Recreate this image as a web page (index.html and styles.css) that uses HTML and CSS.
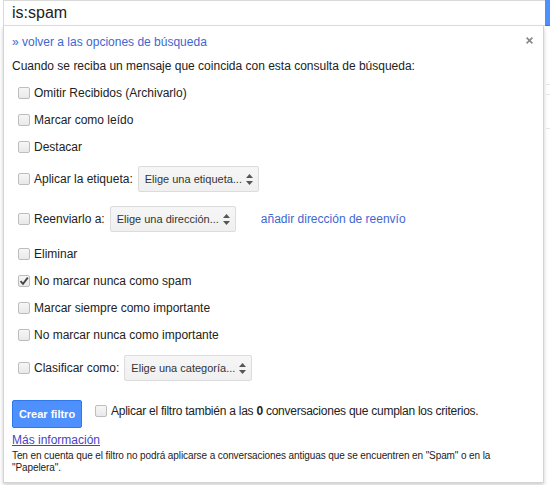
FILE: index.html
```html
<!DOCTYPE html>
<html lang="es">
<head>
<meta charset="utf-8">
<title>Filtro</title>
<link rel="stylesheet" href="styles.css">
</head>
<body>
<div class="page">
  <div class="searchbar">
    <div class="query">is:spam</div>
    <div class="search-btn"></div>
  </div>
  <div class="main">
    <div class="panel">
      <svg class="close" width="7" height="7" viewBox="0 0 7 7"><path d="M0.6 0.6L6.4 6.4M6.4 0.6L0.6 6.4" stroke="#888" stroke-width="1.6"/></svg>
      <a class="back" href="#">» volver a las opciones de búsqueda</a>
      <p class="intro">Cuando se reciba un mensaje que coincida con esta consulta de búsqueda:</p>

      <div class="row"><span class="cb"></span>Omitir Recibidos (Archivarlo)</div>
      <div class="row"><span class="cb"></span>Marcar como leído</div>
      <div class="row"><span class="cb"></span>Destacar</div>
      <div class="row row-select row-label">
        <span class="cb"></span>Aplicar la etiqueta:
        <span class="select">Elige una etiqueta...<svg class="arrows" width="7" height="11" viewBox="0 0 7 11"><path d="M3.5 0L7 4H0Z M3.5 11L7 7H0Z" fill="#555"/></svg></span>
      </div>
      <div class="row row-select row-forward">
        <span class="cb"></span>Reenviarlo a:
        <span class="select">Elige una dirección...<svg class="arrows" width="7" height="11" viewBox="0 0 7 11"><path d="M3.5 0L7 4H0Z M3.5 11L7 7H0Z" fill="#555"/></svg></span>
        <a class="add-link" href="#">añadir dirección de reenvío</a>
      </div>
      <div class="row"><span class="cb"></span>Eliminar</div>
      <div class="row"><span class="cb checked"><svg width="10" height="10" viewBox="0 0 10 10"><path d="M1.5 5.2L4 7.8L8.8 1.6" fill="none" stroke="#444" stroke-width="1.8"/></svg></span>No marcar nunca como spam</div>
      <div class="row"><span class="cb"></span>Marcar siempre como importante</div>
      <div class="row"><span class="cb"></span>No marcar nunca como importante</div>
      <div class="row row-select">
        <span class="cb"></span>Clasificar como:
        <span class="select">Elige una categoría...<svg class="arrows" width="7" height="11" viewBox="0 0 7 11"><path d="M3.5 0L7 4H0Z M3.5 11L7 7H0Z" fill="#555"/></svg></span>
      </div>

      <div class="actions">
        <button class="create" type="button">Crear filtro</button>
        <span class="cb"></span>
        <span class="apply">Aplicar el filtro también a las <b>0</b> conversaciones que cumplan los criterios.</span>
      </div>
      <a class="more" href="#">Más información</a>
      <p class="note">Ten en cuenta que el filtro no podrá aplicarse a conversaciones antiguas que se encuentren en "Spam" o en la "Papelera".</p>
    </div>
    <div class="behind">
      <div class="line l1"></div>
      <div class="line l2"></div>
      <div class="line l3"></div>
    </div>
  </div>
</div>
</body>
</html>
```

FILE: styles.css
```css
* { box-sizing: border-box; }

html, body {
  margin: 0;
  background: #fff;
}

body {
  font-family: Arial, "Liberation Sans", sans-serif;
  color: #222;
  width: 550px;
  height: 485px;
  overflow: hidden;
}

.page {
  padding-left: 3px;
}

/* top search field */
.searchbar {
  display: flex;
  height: 26px;
}

.query {
  flex: 1;
  border: 1px solid #d9d9d9;
  border-right: none;
  border-bottom-color: #e0e0e0;
  font-size: 16px;
  line-height: 23px;
  padding-left: 8px;
  color: #222;
}

.search-btn {
  width: 5px;
  background: #4d90fe;
  border-bottom: 1px solid #3079ed;
}

.main {
  display: flex;
}

/* filter options dropdown */
.panel {
  position: relative;
  width: 541px;
  border: 1px solid #d4d4d4;
  border-top: none;
  box-shadow: 0 2px 4px rgba(0, 0, 0, 0.2);
  padding: 8px 8px 8px 8px;
  font-size: 12px;
}

.close {
  position: absolute;
  top: 11px;
  right: 10px;
}

a {
  color: #3e67d1;
  text-decoration: none;
}

.back {
  display: block;
  font-size: 12px;
  line-height: 16px;
}

.intro {
  margin: 8px 0 5px;
  line-height: 16px;
}

.row {
  display: flex;
  align-items: center;
  height: 27px;
  padding-left: 6px;
}

.row-select {
  height: 40px;
}

.row-label { height: 38px; }
.row-forward { height: 42px; }

.cb {
  width: 12px;
  height: 12px;
  border: 1px solid #bdbdbd;
  border-radius: 2px;
  background: linear-gradient(#f6f6f6, #e9e9e9);
  margin-right: 4px;
  display: inline-flex;
  align-items: center;
  justify-content: center;
  flex: none;
}

.select {
  display: inline-flex;
  align-items: center;
  height: 26px;
  margin-left: 5px;
  padding: 0 5px 0 6px;
  border: 1px solid #dcdcdc;
  border-radius: 2px;
  background: linear-gradient(#f6f6f6, #f0f0f0);
  font-size: 11px;
  color: #333;
}

.arrows {
  margin-left: 4px;
}

.add-link {
  margin-left: 25px;
}

.actions {
  display: flex;
  align-items: center;
  margin-top: 12px;
}

.create {
  width: 70px;
  height: 28px;
  border: 1px solid #3079ed;
  border-radius: 2px;
  background: #4d90fe;
  color: #fff;
  font-family: Arial, "Liberation Sans", sans-serif;
  font-size: 11px;
  font-weight: bold;
  padding: 0;
  margin-right: 13px;
}

.actions .cb {
  margin-top: -6px;
}

.apply {
  margin-top: -6px;
  letter-spacing: -0.25px;
}

.more {
  display: inline-block;
  margin-top: 4px;
  line-height: 16px;
  color: #4b3fc4;
  text-decoration: underline;
}

.note {
  margin: 2px 0 0;
  max-width: 486px;
  font-size: 10px;
  letter-spacing: -0.1px;
  line-height: 12px;
  color: #222;
}

/* page content behind the dropdown */
.behind {
  flex: 1;
  position: relative;
}

.line {
  height: 1px;
  background: #e5e5e5;
  margin-left: 2px;
}

.l1 { margin-top: 58px; }
.l2 { margin-top: 9px; }
.l3 { margin-top: 33px; }
```
